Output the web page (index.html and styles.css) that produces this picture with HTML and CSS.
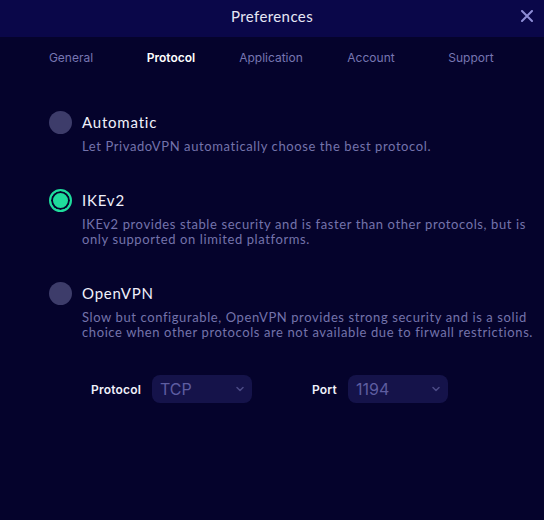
FILE: index.html
```html
<!doctype html>
<html lang="en">
  <head>
    <meta charset="utf-8" />
    <title>Preferences</title>
    <meta name="viewport" content="width=device-width, initial-scale=1" />
    <link rel="stylesheet" href="styles.css">
  </head>

  <body>
    <div class="title-bar">
      <div class="title">Preferences</div>
      <button class="close-btn" aria-label="Close">
        <svg width="12" height="12" viewBox="0 0 12 12">
          <path d="M1 1L11 11M11 1L1 11" stroke="#8e8dd6" stroke-width="2" stroke-linecap="round" />
        </svg>
      </button>
    </div>

    <div class="tabs">
      <div class="tab">General</div>
      <div class="tab active">Protocol</div>
      <div class="tab">Application</div>
      <div class="tab">Account</div>
      <div class="tab">Support</div>
    </div>

    <div class="content">
      <div class="option">
        <div class="option-head">
          <span class="radio"></span>
          <span class="option-label">Automatic</span>
        </div>
        <div class="option-desc">Let PrivadoVPN automatically choose the best protocol.</div>
      </div>

      <div class="option">
        <div class="option-head">
          <span class="radio checked"></span>
          <span class="option-label">IKEv2</span>
        </div>
        <div class="option-desc">IKEv2 provides stable security and is faster than other protocols, but is only supported on limited platforms.</div>
      </div>

      <div class="option">
        <div class="option-head">
          <span class="radio"></span>
          <span class="option-label">OpenVPN</span>
        </div>
        <div class="option-desc">Slow but configurable, OpenVPN provides strong security and is a solid choice when other protocols are not available due to firwall restrictions.</div>
      </div>

      <div class="settings">
        <div class="field">
          <span class="field-label">Protocol</span>
          <div class="select">
            <span>TCP</span>
            <svg width="8" height="6" viewBox="0 0 8 6">
              <path d="M1 1.5L4 4.5L7 1.5" fill="none" stroke="#4b4a86" stroke-width="1.5" stroke-linecap="round" stroke-linejoin="round" />
            </svg>
          </div>
        </div>
        <div class="field">
          <span class="field-label">Port</span>
          <div class="select">
            <span>1194</span>
            <svg width="8" height="6" viewBox="0 0 8 6">
              <path d="M1 1.5L4 4.5L7 1.5" fill="none" stroke="#4b4a86" stroke-width="1.5" stroke-linecap="round" stroke-linejoin="round" />
            </svg>
          </div>
        </div>
      </div>
    </div>
  </body>
</html>
```

FILE: styles.css
```css
html,
body {
  margin: 0;
  padding: 0;
  height: 100%;
  background: #05032c;
  font-family: Lato, 'Noto Sans', sans-serif;
  color: white;
}
.title-bar {
  position: relative;
  height: 37px;
  background: #0a0749;
  display: flex;
  justify-content: center;
  align-items: center;
}
.title {
  font-size: 15px;
  letter-spacing: 0.4px;
  color: #e6e6f5;
  margin-top: -6px;
}
.close-btn {
  position: absolute;
  top: 8px;
  right: 9px;
  width: 16px;
  height: 16px;
  padding: 0;
  border: none;
  background: none;
  display: flex;
  align-items: center;
  justify-content: center;
}
.tabs {
  display: grid;
  grid-template-columns: repeat(5, 100px);
  padding: 13px 0 0 21px;
  height: 29px;
  font-family: Inter, 'Liberation Sans', sans-serif;
  font-size: 12px;
}
.tab {
  text-align: center;
  color: #7776b2;
  line-height: 16px;
}
.tab.active {
  color: white;
  font-weight: 600;
}
.content {
  padding: 32px 0 0 49px;
}
.option {
  margin-bottom: 35px;
}
.option-head {
  display: flex;
  align-items: center;
  gap: 10px;
  height: 22px;
}
.radio {
  box-sizing: border-box;
  width: 23px;
  height: 23px;
  border-radius: 50%;
  background: #3d3c6a;
}
.radio.checked {
  background: #1fdc9c;
  border: 2px solid #1fdc9c;
  box-shadow: inset 0 0 0 2px #05032c;
}
.option-label {
  font-size: 15px;
  letter-spacing: 0.8px;
  color: #f0f0fa;
}
.option-desc {
  margin: 6px 0 0 33px;
  width: 460px;
  font-size: 13px;
  line-height: 15px;
  letter-spacing: 0.6px;
  color: #7473ab;
}
.settings {
  display: flex;
  gap: 60px;
  margin: 3px 0 0 42px;
}
.field {
  display: flex;
  align-items: center;
  gap: 11px;
}
.field-label {
  font-family: Inter, 'Liberation Sans', sans-serif;
  font-size: 12px;
  font-weight: 600;
  letter-spacing: 0.2px;
  color: #f0f0fa;
}
.select {
  box-sizing: border-box;
  width: 100px;
  height: 28px;
  border-radius: 8px;
  background: #15134a;
  display: flex;
  align-items: center;
  justify-content: space-between;
  padding: 0 8px 0 8px;
  font-family: Inter, 'Liberation Sans', sans-serif;
  font-size: 16px;
  color: #5e5da0;
}
```
